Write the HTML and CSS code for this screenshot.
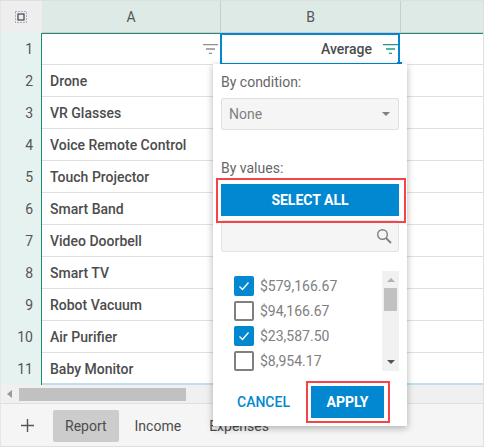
FILE: index.html
```html
<!DOCTYPE html>
<html>
    <head>
        <meta charset="UTF-8"/>
        <title>Report</title>
        <link rel="stylesheet" href="styles.css">
    </head>

    <body>
        <div class="sheet">
            <div class="grid">
                <div class="head-row">
                    <div class="corner">
                        <svg width="12" height="12" viewBox="0 0 12 12">
                            <rect x="0.5" y="0.5" width="11" height="11" fill="none" stroke="#5b6fa8" stroke-dasharray="1 2"/>
                            <rect x="3" y="3" width="6" height="6" fill="none" stroke="#444" stroke-width="1.2"/>
                        </svg>
                    </div>
                    <div class="col col-a">A</div>
                    <div class="col col-b">B</div>
                    <div class="col col-rest"></div>
                </div>

                <div class="row first">
                    <div class="num">1</div>
                    <div class="cell col-a filter-cell">
                        <svg class="filter" width="15" height="10" viewBox="0 0 15 10">
                            <path d="M0 .5h15M3 5h9M6 9.5h3" stroke="#8f8f8f" stroke-width="1.4" fill="none"/>
                        </svg>
                    </div>
                    <div class="cell col-b filter-cell selected">
                        Average
                        <svg class="filter" width="15" height="10" viewBox="0 0 15 10">
                            <path d="M0 .5h15M3 5h9M6 9.5h3" stroke="#1f9b7e" stroke-width="1.4" fill="none"/>
                        </svg>
                    </div>
                    <div class="cell col-rest"></div>
                </div>
                <div class="row"><div class="num">2</div><div class="cell col-a">Drone</div><div class="cell col-b"></div><div class="cell col-rest"></div></div>
                <div class="row"><div class="num">3</div><div class="cell col-a">VR Glasses</div><div class="cell col-b"></div><div class="cell col-rest"></div></div>
                <div class="row"><div class="num">4</div><div class="cell col-a">Voice Remote Control</div><div class="cell col-b"></div><div class="cell col-rest"></div></div>
                <div class="row"><div class="num">5</div><div class="cell col-a">Touch Projector</div><div class="cell col-b"></div><div class="cell col-rest"></div></div>
                <div class="row"><div class="num">6</div><div class="cell col-a">Smart Band</div><div class="cell col-b"></div><div class="cell col-rest"></div></div>
                <div class="row"><div class="num">7</div><div class="cell col-a">Video Doorbell</div><div class="cell col-b"></div><div class="cell col-rest"></div></div>
                <div class="row"><div class="num">8</div><div class="cell col-a">Smart TV</div><div class="cell col-b"></div><div class="cell col-rest"></div></div>
                <div class="row"><div class="num">9</div><div class="cell col-a">Robot Vacuum</div><div class="cell col-b"></div><div class="cell col-rest"></div></div>
                <div class="row"><div class="num">10</div><div class="cell col-a">Air Purifier</div><div class="cell col-b"></div><div class="cell col-rest"></div></div>
                <div class="row last"><div class="num">11</div><div class="cell col-a">Baby Monitor</div><div class="cell col-b"></div><div class="cell col-rest"></div></div>
            </div>

            <div class="hscroll">
                <span class="arrow-left"></span>
                <div class="hthumb"></div>
            </div>

            <div class="tabs">
                <svg class="add" width="13" height="13" viewBox="0 0 13 13">
                    <path d="M6.5 0v13M0 6.5h13" stroke="#555" stroke-width="1.4" fill="none"/>
                </svg>
                <div class="tab active">Report</div>
                <div class="tab">Income</div>
                <div class="tab">Expenses</div>
            </div>

            <div class="popup">
                <div class="label">By condition:</div>
                <div class="select">
                    None
                    <span class="caret"></span>
                </div>

                <div class="label values-label">By values:</div>
                <div class="btn select-all marked">SELECT ALL</div>
                <div class="search">
                    <svg width="16" height="16" viewBox="0 0 16 16">
                        <circle cx="6.5" cy="6.5" r="4.8" fill="none" stroke="#808080" stroke-width="1.4"/>
                        <path d="M10 10l5 5" stroke="#808080" stroke-width="1.8" fill="none"/>
                    </svg>
                </div>

                <div class="list">
                    <div class="items">
                        <div class="item">
                            <span class="box checked">
                                <svg width="20" height="20" viewBox="0 0 20 20"><path d="M5.5 10.5l3 3 6-7" stroke="#fff" stroke-width="1.4" fill="none"/></svg>
                            </span>
                            $579,166.67
                        </div>
                        <div class="item"><span class="box"></span>$94,166.67</div>
                        <div class="item">
                            <span class="box checked">
                                <svg width="20" height="20" viewBox="0 0 20 20"><path d="M5.5 10.5l3 3 6-7" stroke="#fff" stroke-width="1.4" fill="none"/></svg>
                            </span>
                            $23,587.50
                        </div>
                        <div class="item"><span class="box"></span>$8,954.17</div>
                    </div>
                    <div class="vscroll">
                        <span class="arrow-up"></span>
                        <div class="vthumb"></div>
                        <span class="arrow-down"></span>
                    </div>
                </div>

                <div class="actions">
                    <div class="cancel">CANCEL</div>
                    <div class="btn apply marked">APPLY</div>
                </div>
            </div>
        </div>
    </body>
</html>
```

FILE: styles.css
```css
html,body{
    margin:0;
    padding:0;
}
body{
    font-family:Roboto,"Liberation Sans",sans-serif;
    font-size:14px;
    color:#4c4c4c;
    background:#fff;
}
.sheet{
    position:relative;
    box-sizing:border-box;
    width:484px;
    height:447px;
    overflow:hidden;
    border:1px #dfdfdf solid;
    border-left-color:#e6e6e6;
}

/* grid */
.head-row{
    display:flex;
    height:32px;
}
.corner{
    display:flex;
    align-items:center;
    justify-content:center;
    box-sizing:border-box;
    width:41px;
    padding-right:1px;
    background:#eee;
}
.col{
    display:flex;
    align-items:center;
    justify-content:center;
    box-sizing:border-box;
    background:#deeae6;
    border-bottom:1px #ccc solid;
    border-right:1px #ccc solid;
    color:#555;
}
.col-a{
    width:179px;
    flex:none;
}
.col-b{
    width:180px;
    flex:none;
}
.col-rest{
    flex:1;
    border-right:none;
}
.row{
    display:flex;
    box-sizing:border-box;
    height:32px;
}
.num{
    box-sizing:border-box;
    width:41px;
    padding-right:8px;
    line-height:33px;
    text-align:right;
    color:#555;
    background:#e6f2ef;
    border-right:1px #1f8a76 solid;
}
.row.first .num{
    height:32px;
}
.cell{
    box-sizing:border-box;
    padding-left:8px;
    line-height:33px;
    font-weight:500;
    border-bottom:1px #dfdfdf solid;
    border-right:1px #eee solid;
}
.cell.col-rest{
    border-right:none;
}
.row.first .cell{
    border-top:1px #1f8a76 solid;
    line-height:30px;
}
.row.last .cell{
    border-bottom:2px #bde0ef solid;
}
.filter-cell{
    display:flex;
    align-items:center;
    justify-content:flex-end;
    padding-right:2px;
}
.filter{
    margin-left:11px;
}
.cell.selected{
    position:relative;
    width:180px;
    margin-left:-1px;
    flex:none;
    border:2px #0288d1 solid;
    padding-right:0;
}
.row.first .cell.selected{
    border-top:2px #0288d1 solid;
    line-height:28px;
}
.cell.selected::after{
    content:"";
    position:absolute;
    right:-4px;
    bottom:-4px;
    width:5px;
    height:5px;
    background:#0288d1;
}

/* horizontal scrollbar */
.hscroll{
    display:flex;
    align-items:center;
    height:18px;
    background:#f0f0f0;
    border-bottom:1px #dfdfdf solid;
}
.arrow-left{
    width:0;
    height:0;
    margin-left:6px;
    margin-right:7px;
    border-top:4px transparent solid;
    border-bottom:4px transparent solid;
    border-right:5px #9a9a9a solid;
}
.hthumb{
    width:167px;
    height:13px;
    background:#c1c1c1;
}

/* tab bar */
.tabs{
    display:flex;
    align-items:center;
    height:42px;
    padding-top:1px;
    box-sizing:border-box;
    background:#f5f5f5;
}
.add{
    margin-left:20px;
    margin-right:19px;
}
.tab{
    height:32px;
    padding:0 12px;
    line-height:32px;
    margin-right:4px;
    border-radius:2px;
    color:#4c4c4c;
}
.tab.active{
    background:#ccc;
}

/* filter popup */
.popup{
    position:absolute;
    left:212px;
    top:63px;
    box-sizing:border-box;
    width:194px;
    height:362px;
    padding:8px 8px 0 8px;
    background:#fff;
    box-shadow:0 2px 7px rgba(0,0,0,.3);
}
.label{
    height:20px;
    line-height:20px;
    color:#666;
}
.select{
    display:flex;
    align-items:center;
    justify-content:space-between;
    box-sizing:border-box;
    height:32px;
    margin-top:6px;
    padding:0 8px 0 7px;
    color:#808080;
    background:#f5f5f5;
    border:1px #dfdfdf solid;
    border-radius:2px;
}
.caret{
    width:0;
    height:0;
    border-left:4px transparent solid;
    border-right:4px transparent solid;
    border-top:4px #808080 solid;
}
.values-label{
    margin-top:28px;
}
.btn{
    display:flex;
    align-items:center;
    justify-content:center;
    height:32px;
    font-weight:700;
    color:#fff;
    background:#0288d1;
}
.select-all{
    margin-top:6px;
}
.marked{
    position:relative;
}
.marked::after{
    content:"";
    position:absolute;
    box-sizing:border-box;
    top:-6px;
    right:-7px;
    bottom:-7px;
    left:-5px;
    border:2px #f44448 solid;
}
.search{
    display:flex;
    align-items:center;
    justify-content:flex-end;
    box-sizing:border-box;
    height:32px;
    margin-top:4px;
    padding-right:6px;
    background:#f5f5f5;
    border:1px #e4e4e4 solid;
    border-radius:2px;
}
.list{
    display:flex;
    justify-content:space-between;
    height:100px;
    margin-top:19px;
}
.items{
    padding-left:13px;
    padding-top:2px;
}
.item{
    display:flex;
    align-items:center;
    height:25px;
    color:#808080;
}
.box{
    box-sizing:border-box;
    width:20px;
    height:20px;
    margin-right:6px;
    border:2px #808080 solid;
    border-radius:2px;
}
.box svg{
    display:block;
}
.box.checked{
    border:none;
    background:#0288d1;
}
.vscroll{
    display:flex;
    flex-direction:column;
    align-items:center;
    box-sizing:border-box;
    width:17px;
    padding-top:7px;
    background:#f1f1f1;
}
.arrow-up{
    width:0;
    height:0;
    border-left:4px transparent solid;
    border-right:4px transparent solid;
    border-bottom:4px #b0b0b0 solid;
}
.vthumb{
    width:13px;
    height:23px;
    margin-top:6px;
    background:#c1c1c1;
}
.arrow-down{
    width:0;
    height:0;
    margin-top:49px;
    border-left:4px transparent solid;
    border-right:4px transparent solid;
    border-top:4px #555 solid;
}
.actions{
    display:flex;
    align-items:center;
    height:32px;
    margin-top:15px;
}
.cancel{
    margin-left:16px;
    font-weight:500;
    color:#0288d1;
}
.apply{
    width:73px;
    margin-left:21px;
}
.apply::after{
    top:-5px;
    right:-6px;
    bottom:-5px;
    left:-5px;
}
```
